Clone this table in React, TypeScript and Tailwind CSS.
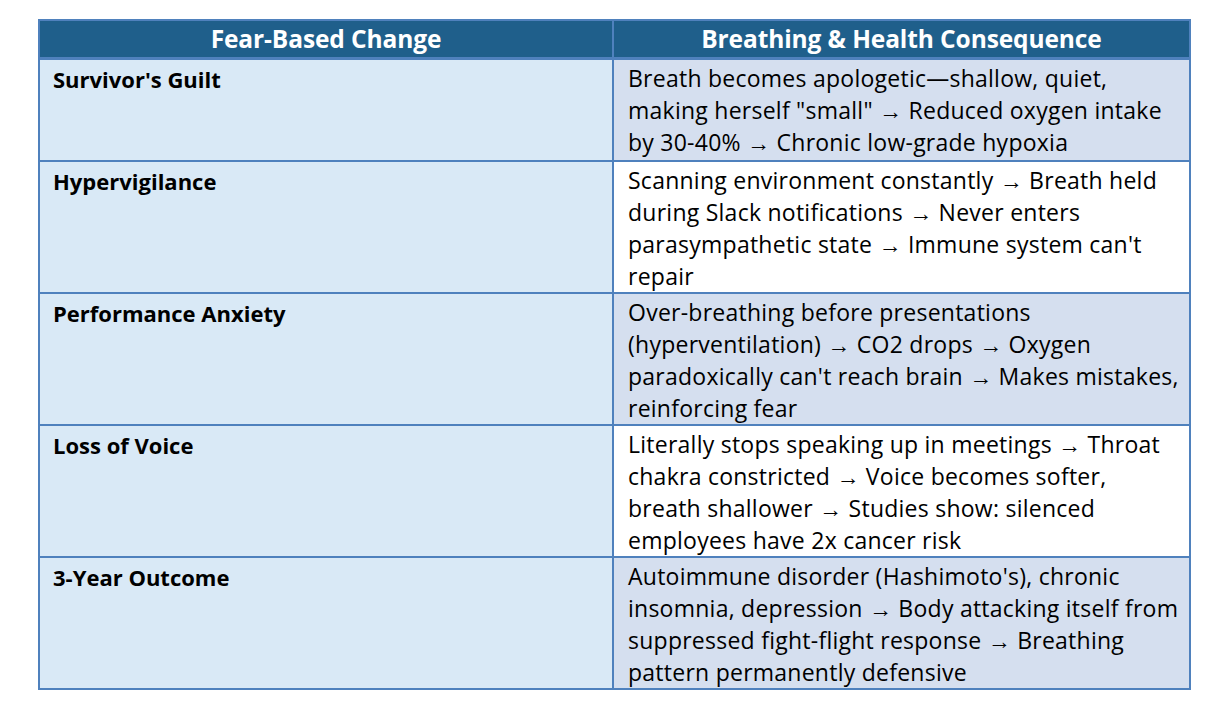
const rows = [
  {
    label: "Survivor's Guilt",
    shaded: true,
    lines: [
      "Breath becomes apologetic—shallow, quiet,",
      "making herself \"small\" → Reduced oxygen intake",
      "by 30-40% → Chronic low-grade hypoxia",
    ],
  },
  {
    label: "Hypervigilance",
    shaded: false,
    lines: [
      "Scanning environment constantly → Breath held",
      "during Slack notifications → Never enters",
      "parasympathetic state → Immune system can't",
      "repair",
    ],
  },
  {
    label: "Performance Anxiety",
    shaded: true,
    lines: [
      "Over-breathing before presentations",
      "(hyperventilation) → CO2 drops → Oxygen",
      "paradoxically can't reach brain → Makes mistakes,",
      "reinforcing fear",
    ],
  },
  {
    label: "Loss of Voice",
    shaded: false,
    lines: [
      "Literally stops speaking up in meetings → Throat",
      "chakra constricted → Voice becomes softer,",
      "breath shallower → Studies show: silenced",
      "employees have 2x cancer risk",
    ],
  },
  {
    label: "3-Year Outcome",
    shaded: true,
    lines: [
      "Autoimmune disorder (Hashimoto's), chronic",
      "insomnia, depression → Body attacking itself from",
      "suppressed fight-flight response → Breathing",
      "pattern permanently defensive",
    ],
  },
];

export default function App() {
  return (
    <div className="w-[1228px] h-[708px] bg-white pt-[19px] pl-[38px] font-['Open_Sans',sans-serif] text-black">
      <div className="w-[1153px] border-2 border-[#4f81bd]">
        {/* header */}
        <div className="flex h-[39px] bg-[#1f5f8b] border-b-[3px] border-[#4f81bd] text-white font-bold text-[24.5px] tracking-[-0.1px]">
          <div className="w-[574px] border-r-2 border-[#4f81bd] flex items-center justify-center">
            Fear-Based Change
          </div>
          <div className="flex-1 flex items-center justify-center">Breathing &amp; Health Consequence</div>
        </div>

        {rows.map((row, i) => (
          <div
            key={row.label}
            className={`flex ${i === 0 ? "h-[100px]" : "h-[132px] border-t-2 border-[#4f81bd]"}`}
          >
            <div className="w-[574px] border-r-2 border-[#4f81bd] bg-[#d9e9f6] pl-[13px] pt-[3px] text-[22px] leading-[32px] font-bold">
              {row.label}
            </div>
            <div
              className={`flex-1 pl-[14px] pt-[2px] text-[23px] leading-[32px] tracking-[0.25px] ${
                row.shaded ? "bg-[#d5dfef]" : "bg-white"
              }`}
            >
              {row.lines.map((line) => (
                <div key={line} className="whitespace-nowrap">
                  {line}
                </div>
              ))}
            </div>
          </div>
        ))}
      </div>
    </div>
  );
}
